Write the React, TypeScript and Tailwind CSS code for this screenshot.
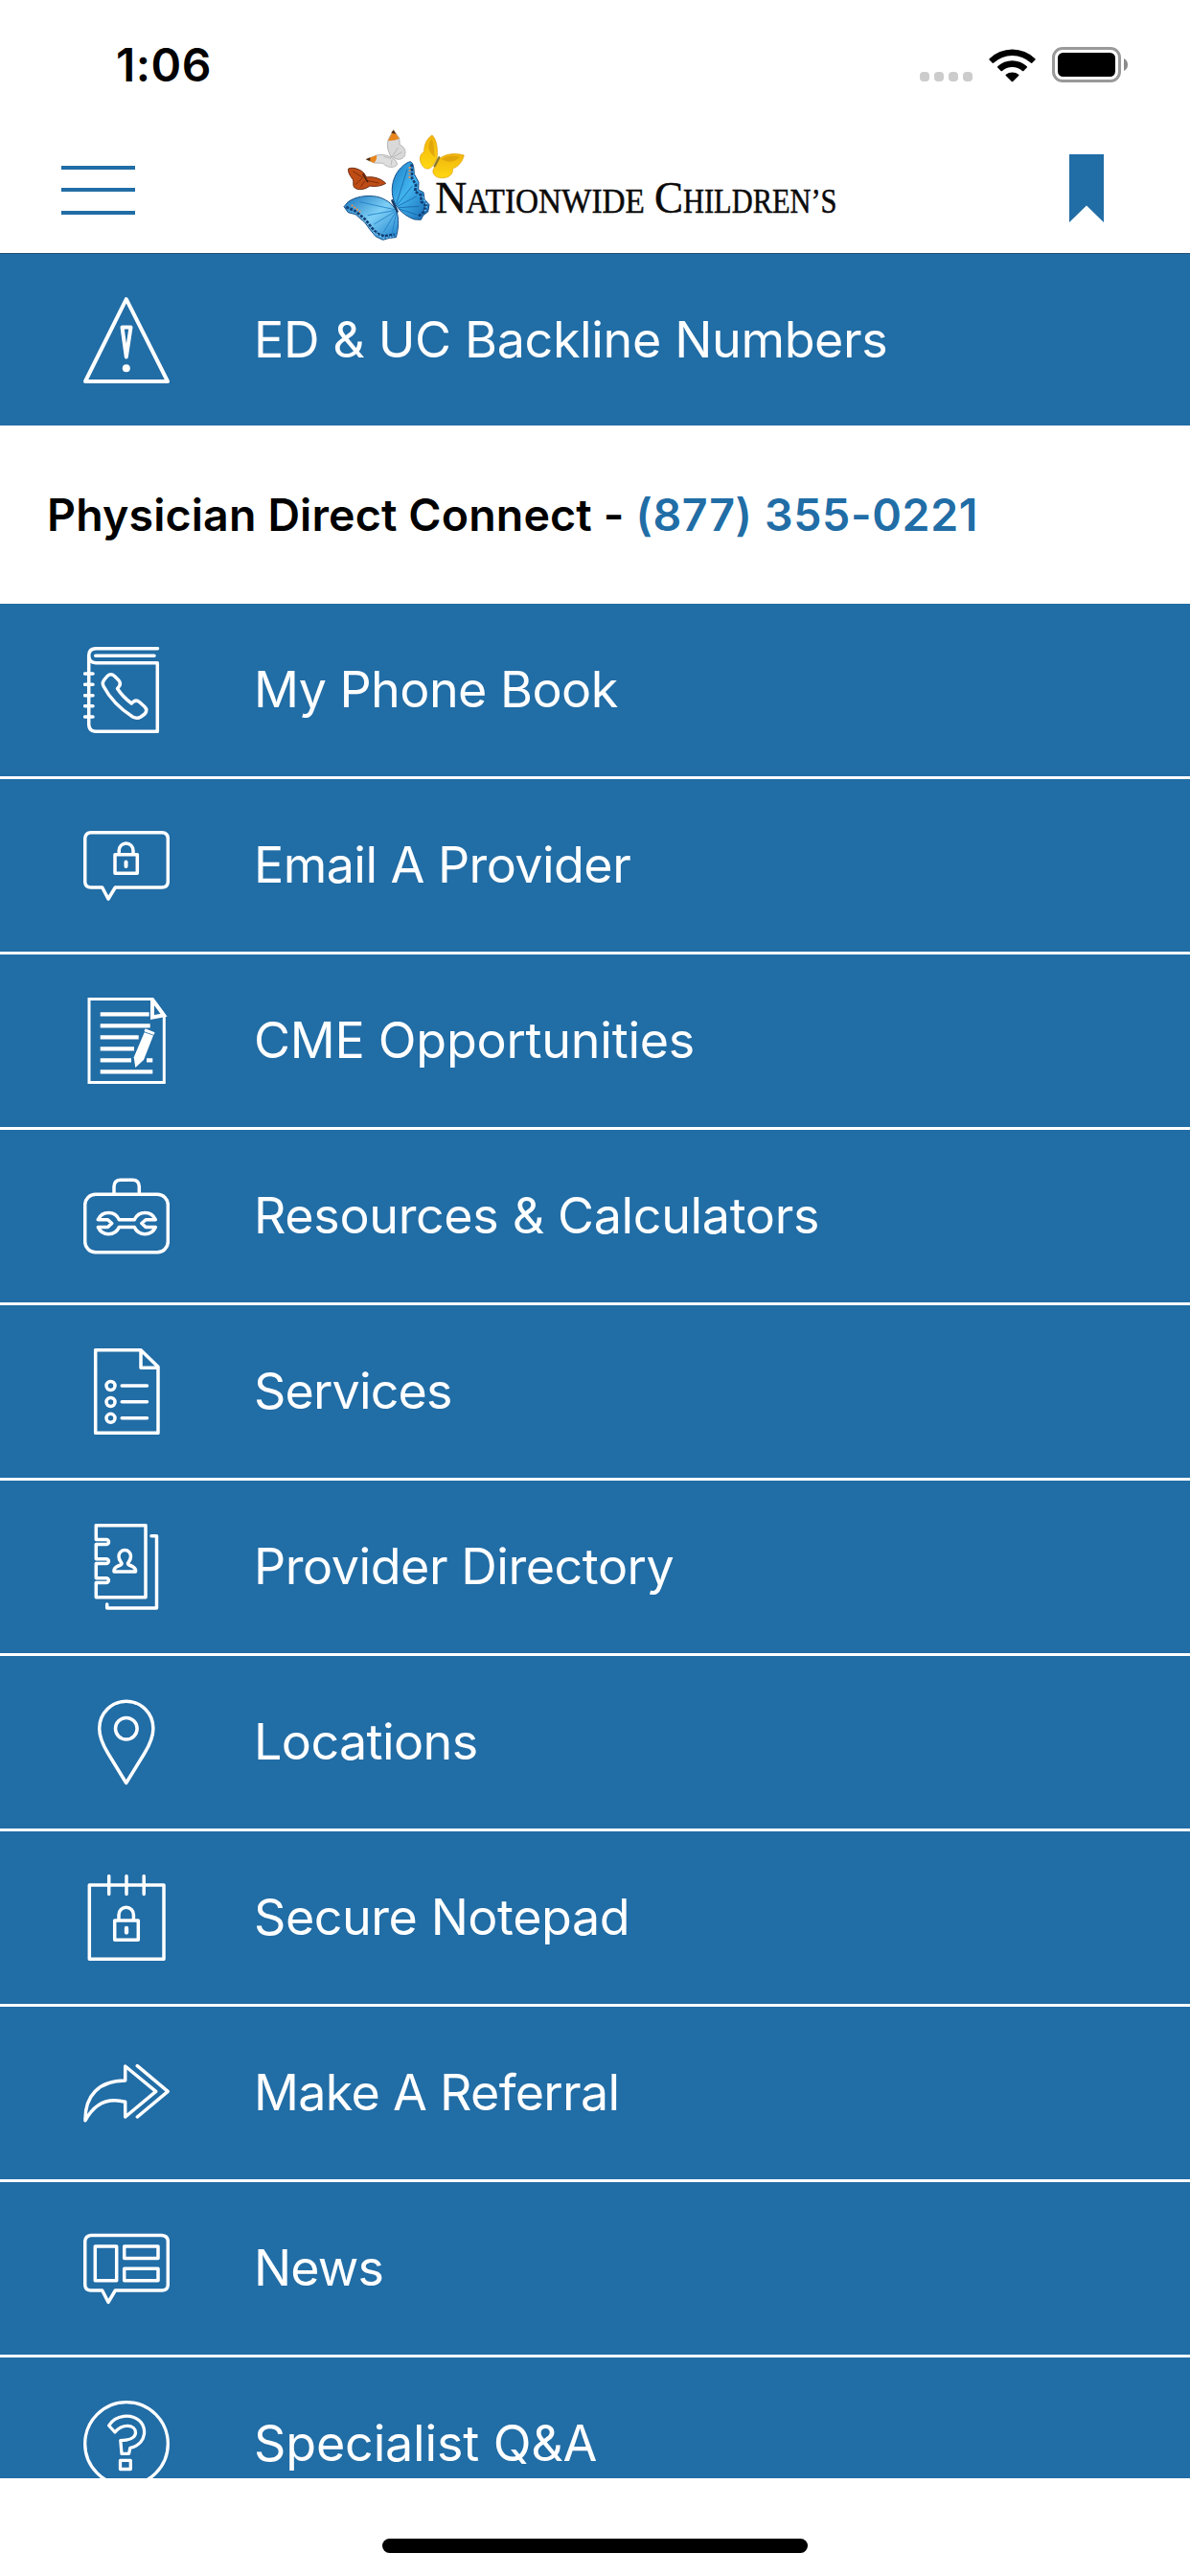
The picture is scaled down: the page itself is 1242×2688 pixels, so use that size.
import { ReactNode } from "react";

type MenuItem = {
  label: string;
  icon: ReactNode;
  tracking: string;
};

const backline: MenuItem = {
  label: "ED & UC Backline Numbers",
  icon: <WarningIcon />,
  tracking: "tracking-[-0.35px]",
};

const menu: MenuItem[] = [
  { label: "My Phone Book", icon: <PhoneBookIcon />, tracking: "tracking-[-0.55px]" },
  { label: "Email A Provider", icon: <SecureMessageIcon />, tracking: "tracking-[-0.55px]" },
  { label: "CME Opportunities", icon: <CmeIcon />, tracking: "tracking-[-0.25px]" },
  { label: "Resources & Calculators", icon: <ToolboxIcon />, tracking: "tracking-[-0.35px]" },
  { label: "Services", icon: <ServicesIcon />, tracking: "tracking-[-0.85px]" },
  { label: "Provider Directory", icon: <DirectoryIcon />, tracking: "tracking-[-0.45px]" },
  { label: "Locations", icon: <PinIcon />, tracking: "tracking-[-0.6px]" },
  { label: "Secure Notepad", icon: <NotepadIcon />, tracking: "tracking-[-0.45px]" },
  { label: "Make A Referral", icon: <ReferralIcon />, tracking: "tracking-[-0.7px]" },
  { label: "News", icon: <NewsIcon />, tracking: "tracking-[-0.85px]" },
  { label: "Specialist Q&A", icon: <QuestionIcon />, tracking: "tracking-[-0.15px]" },
];

export default function App() {
  return (
    <div className="flex h-[2688px] w-[1242px] flex-col overflow-hidden bg-white font-['Inter',sans-serif]">
      <StatusBar />

      {/* NAV BAR */}
      <header className="flex h-[133px] shrink-0 items-center justify-between border-b border-[#1d4f78] bg-white pr-[90px] pl-[64px]">
        <button aria-label="Menu" className="flex h-[51px] w-[77px] flex-col justify-between">
          <span className="h-1 w-full bg-[#216da6]" />
          <span className="h-1 w-full bg-[#216da6]" />
          <span className="h-1 w-full bg-[#216da6]" />
        </button>
        <Logo />
        <button aria-label="Bookmarks" className="-mt-[3px]">
          <svg width="36" height="71" viewBox="0 0 36 71" fill="#216da6">
            <path d="M0 0H36V71L18 53.5 0 71Z" />
          </svg>
        </button>
      </header>

      {/* MENU */}
      <main className="flex min-h-0 flex-1 flex-col overflow-hidden">
        <div className="h-[179px] shrink-0">
          <MenuRow item={backline} />
        </div>

        <div className="flex h-[186px] shrink-0 items-center pl-[49px] text-[46.5px] leading-none font-semibold whitespace-pre text-black">
          <span className="tracking-[0.15px]">Physician Direct Connect - </span>
          <a className="tracking-[0.65px] text-[#216da6]">(877) 355-0221</a>
        </div>

        <nav className="flex flex-col gap-[3px]">
          {menu.map((item) => (
            <div key={item.label} className="h-[180px] shrink-0">
              <MenuRow item={item} />
            </div>
          ))}
        </nav>
      </main>

      {/* HOME INDICATOR */}
      <footer className="flex h-[102px] shrink-0 justify-center bg-white pt-[63px]">
        <div className="h-[15px] w-[444px] rounded-full bg-black" />
      </footer>
    </div>
  );
}

function MenuRow({ item }: { item: MenuItem }) {
  return (
    <div className="flex h-full items-center bg-[#216da6] pl-[87px] text-white">
      {item.icon}
      <span className={`ml-[88px] text-[52px] leading-none whitespace-nowrap ${item.tracking}`}>
        {item.label}
      </span>
    </div>
  );
}

function StatusBar() {
  return (
    <div className="flex h-[132px] shrink-0 justify-between pr-[65px] pl-[121px]">
      <span className="pt-[44px] text-[48px] leading-[48px] font-semibold tracking-[0.5px] text-black">
        1:06
      </span>
      <div className="flex pt-[49px]">
        <div className="flex gap-[5px] pt-[26px]">
          <i className="h-[10px] w-[10px] rounded-[4px] bg-[#cccccc]" />
          <i className="h-[10px] w-[10px] rounded-[4px] bg-[#cccccc]" />
          <i className="h-[10px] w-[10px] rounded-[4px] bg-[#cccccc]" />
          <i className="h-[10px] w-[10px] rounded-[4px] bg-[#cccccc]" />
        </div>
        <svg className="ml-[17px]" width="49" height="37" viewBox="0 0 49 37">
          <path d="M0.6 12.2A34 34 0 0 1 48.4 12.2Q49 13 48.4 13.6L45.2 16.8Q44.5 17.3 43.8 16.6A28.5 28.5 0 0 0 5.2 16.6Q4.500 17.3 3.8 16.8L0.6 13.600Q0 13 0.6 12.2Z" />
          <path d="M9.2 20.2A22.5 22.5 0 0 1 39.8 20.2Q40.4 21 39.8 21.6L36.4 25Q35.7 25.6 35 25A15.5 15.5 0 0 0 14 25Q13.3 25.6 12.6 25L9.2 21.6Q8.6 21 9.2 20.2Z" />
          <path d="M17.8 28.8A10.5 10.5 0 0 1 31.2 28.8Q31.8 29.5 31.2 30.1L25.2 36Q24.5 36.6 23.8 36L17.8 30.1Q17.2 29.5 17.8 28.8Z" />
        </svg>
        <svg className="ml-[17px]" width="79" height="37" viewBox="0 0 79 37">
          <rect x="1.5" y="1.5" width="69" height="34" rx="9.5" fill="none" stroke="#999999" strokeWidth="3" />
          <rect x="6" y="6" width="60" height="25" rx="5.5" />
          <path d="M75 12Q79 14 79 18.5T75 25Z" fill="#8a8a8a" />
        </svg>
      </div>
    </div>
  );
}

/* LOGO */
function Logo() {
  return (
    <svg className="-mt-2 mr-6 overflow-visible" width="520" height="120" viewBox="0 0 520 120">
      <defs>
        <linearGradient id="wingRight" x1="0" y1="0" x2="1" y2="1">
          <stop offset="0" stopColor="#1b7cc4" />
          <stop offset="0.45" stopColor="#41b4ee" />
          <stop offset="1" stopColor="#1566b0" />
        </linearGradient>
        <linearGradient id="wingLeft" x1="0" y1="0" x2="1" y2="1">
          <stop offset="0" stopColor="#1674bd" />
          <stop offset="0.5" stopColor="#7fd0f6" />
          <stop offset="1" stopColor="#1a7fca" />
        </linearGradient>
        <linearGradient id="yellow" x1="0" y1="0" x2="0" y2="1">
          <stop offset="0" stopColor="#f0b40c" />
          <stop offset="1" stopColor="#ffd813" />
        </linearGradient>
      </defs>

      <g transform="scale(0.3333) translate(-50 -40)">
        {/* white butterfly */}
        <path d="M203 128C190 105 190 85 196 72L211 45 229 70 231 92C246 97 252 112 245 128 237 140 220 139 210 130Z" fill="#d9d9d9" stroke="#999" strokeWidth="2" />
        <path d="M194 78L211 45 229 72Q212 80 194 78Z" fill="#e8851c" />
        <path d="M204 54L211 45 219 57Z" fill="#4a2a1a" />
        <path d="M206 132C190 122 175 121 158 124L125 137 150 148 178 149C190 163 212 166 223 153Q222 140 206 132Z" fill="#dedede" stroke="#999" strokeWidth="2" />
        <path d="M158 124L125 137 150 148Q161 137 158 124Z" fill="#e8851c" />
        <path d="M138 131L125 137 138 142Z" fill="#4a2a1a" />
        <path d="M208 126L226 100M209 130L238 114M203 134L180 128M206 138L204 155" stroke="#a8a8a8" strokeWidth="2" fill="none" />

        {/* orange butterfly */}
        <path d="M70 166C85 160 106 168 117 178L127 193C148 189 174 198 187 212 172 221 153 223 137 220 123 231 101 235 90 226 82 221 88 208 84 200 76 190 68 178 70 166Z" fill="#bf4c15" stroke="#6b2b12" strokeWidth="3" />
        <path d="M84 174L115 194 92 216M127 203L165 211M122 204L108 224" stroke="#7a2d0d" strokeWidth="3" fill="none" />
        <path d="M116 184L130 207" stroke="#4d210f" strokeWidth="5" strokeLinecap="round" />

        {/* yellow butterfly */}
        <path d="M347 136C350 115 350 78 332 61 315 72 306 92 307 113 292 121 291 139 299 152 306 169 323 171 333 158Z" fill="url(#yellow)" stroke="#e0a010" strokeWidth="2" />
        <path d="M350 140C367 120 400 115 432 124 427 145 414 160 396 166 399 181 387 194 368 195 347 197 332 186 335 170Z" fill="url(#yellow)" stroke="#e0a010" strokeWidth="2" />
        <path d="M341 130C338 105 338 90 331 74 318 90 315 110 341 130ZM362 137C378 124 400 124 419 130 402 145 385 149 362 137Z" fill="#d99b0b" opacity="0.7" />
        <path d="M354 131L340 158" stroke="#8d7a2a" strokeWidth="7" strokeLinecap="round" />

        {/* blue butterfly */}
        <path d="M217 278C203 250 203 213 219 184 230 163 250 147 264 144 274 148 275 165 276 183L290 209 289 232 305 240 308 262 323 279 319 301 304 312 297 326 277 325C257 318 234 304 217 278Z" fill="url(#wingRight)" stroke="#164d86" strokeWidth="3" strokeLinejoin="round" />
        <path d="M220 298C208 275 185 260 160 254 126 247 89 255 69 270L56 285 69 303 92 309 121 334 136 355 155 378 178 389 199 383 219 381C227 355 229 320 220 298Z" fill="url(#wingLeft)" stroke="#164d86" strokeWidth="3" strokeLinejoin="round" />
        <path d="M220 276L254 168M222 280L270 220M224 284L284 252M226 288L292 284M228 292L284 310" stroke="#1766aa" strokeWidth="2.5" fill="none" />
        <path d="M214 294L105 270M214 297L130 312M216 300L150 340M218 302L180 365M220 304L206 370" stroke="#1f7fc6" strokeWidth="2.5" fill="none" />
        <path d="M268 152L269 196 281 216 279 238 297 248 298 269 312 282 306 301 289 315" stroke="#123e74" strokeWidth="8" strokeDasharray="9 4" fill="none" />
        <path d="M63 286L92 299 124 326 142 350 160 369 182 377 214 372" stroke="#123e74" strokeWidth="8" strokeDasharray="9 4" fill="none" />
        <path d="M262 160L261 198M80 280L108 302" stroke="#ef8f4a" strokeWidth="6" strokeDasharray="5 5" fill="none" />
        <path d="M303 254L316 280 309 300M150 366L180 384 212 378" stroke="#8fd4f5" strokeWidth="4" strokeDasharray="4 7" fill="none" />
        <path d="M207 266L223 300" stroke="#143a66" strokeWidth="7" strokeLinecap="round" />
      </g>

      <g className="font-['Liberation_Serif',serif]" fill="#0a0a0a" stroke="#0a0a0a" strokeWidth="0.5">
        <text y="88.3">
          <tspan x="97.3" fontSize="46.5" textLength="33" lengthAdjust="spacingAndGlyphs">N</tspan>
          <tspan x="129.3" fontSize="35.5" textLength="186.5" lengthAdjust="spacingAndGlyphs">ATIONWIDE</tspan>
        </text>
        <text y="88.3">
          <tspan x="326" fontSize="46.5" textLength="30" lengthAdjust="spacingAndGlyphs">C</tspan>
          <tspan x="356" fontSize="35.5" textLength="160.500" lengthAdjust="spacingAndGlyphs">HILDREN’S</tspan>
        </text>
      </g>
    </svg>
  );
}

/* MENU ICONS */
function Icon({ children, stroke = 3.5 }: { children: ReactNode; stroke?: number }) {
  return (
    <svg
      className="shrink-0"
      width="90"
      height="90"
      viewBox="0 0 90 90"
      fill="none"
      stroke="currentColor"
      strokeWidth={stroke}
      strokeLinecap="round"
      strokeLinejoin="round"
    >
      {children}
    </svg>
  );
}

function WarningIcon() {
  return (
    <Icon stroke={4}>
      <path d="M44.8 2.2L88 88H2Z" />
      <path d="M40.5 31.5H49.5L44.8 62.5Z" />
      <circle cx="44.8" cy="74.3" r="4" fill="currentColor" stroke="none" />
    </Icon>
  );
}

function PhoneBookIcon() {
  return (
    <Icon>
      <path d="M77.5 1.7H13Q5.7 2 5.7 9V81Q6 88.3 13.5 88.3H77.3V16.7H13Q6 16.5 5.7 9M12.7 9.2H74" />
      <path d="M1.5 28H10M1.5 39.3H10M1.5 50.7H10M1.5 61.7H10M1.5 73H10" />
      <path d="M22.5 33.5L25 30.5Q28.7 27 32.5 30.5L37 35Q39.5 38 37.5 41L35.5 43.5Q41 52 50.3 59L52.5 57Q55.5 55 58.5 57.5L64 62.5Q67.5 66 64 70L60 73Q56 75.5 51.5 73Q31 60 21 41Q19 37 22.5 33.5Z" />
    </Icon>
  );
}

function SecureMessageIcon() {
  return (
    <Icon>
      <path d="M8 10.7H82Q88.3 11 88.3 17V62Q88 68 82 68H33.3L26 80 19.7 68H8Q2 68 1.7 62V17Q2 11 8 10.7Z" />
      <path d="M33 33.7H56.3V53.3H33ZM37.2 33V29.5A7.3 7.5 0 0 1 52 29.5V33" />
      <path d="M44.5 41.5V46" strokeWidth="4" />
    </Icon>
  );
}

function CmeIcon() {
  return (
    <Icon stroke={3}>
      <path d="M6 1.5H72L84.3 18.3V88.5H6Z" strokeLinejoin="miter" />
      <path d="M72 2V20.5L84 18.3Z" strokeWidth="4" strokeLinejoin="miter" />
      <path
        d="M17.7 17.3H68.7M17.7 29.3H69.7M17.7 41.3H57.7M17.7 53.3H53M17.7 65.3H50M66 65.3H72.3M17.7 77.3H72.3"
        strokeWidth="4.3"
        strokeLinecap="butt"
      />
      <path d="M63.7 36.3L73 39.5 63 65 54.3 73 52.7 62.3Z" fill="currentColor" stroke="none" />
      <path d="M64.9 33.2L73.7 36.7 73.2 38 64.3 34.7Z" strokeWidth="1.5" />
    </Icon>
  );
}

function ToolboxIcon() {
  return (
    <Icon>
      <rect x="1.7" y="22.3" width="86.6" height="60.4" rx="11" />
      <path d="M32 22V14Q32.3 7.5 39 7.3H51.5Q58 7.5 58.3 14V22" />
      <path d="M15.3 48.7H25.5L29.7 52.5 25.5 56.5H15.3A12 12 0 0 0 37.3 56.5H53.3A12 12 0 0 0 75.3 56.5H65.1L60.9 52.5 65.1 48.7H75.3A12 12 0 0 0 53.3 48.7H37.3A12 12 0 0 0 15.3 48.7Z" />
    </Icon>
  );
}

function ServicesIcon() {
  return (
    <Icon>
      <path d="M12.7 1.7H60L78 19.3V88.3H12.7ZM60 2V20.3H77.5" />
      <circle cx="28.5" cy="39" r="4.5" />
      <circle cx="28.5" cy="56" r="4.5" />
      <circle cx="28.5" cy="72.8" r="4.5" />
      <path d="M40.2 39H66.5M40.2 55.8H66.5M40.2 72.7H66.5" />
    </Icon>
  );
}

function DirectoryIcon() {
  return (
    <Icon>
      <path d="M13.3 16.5V1.7H65V76.7H13.3V61.5H24A2.3 2.3 0 0 0 24 56.7H13.3V41.5H24A2.3 2.3 0 0 0 24 36.7H13.3V21.5H24A2.3 2.3 0 0 0 24 16.5Z" />
      <path d="M71 12.7H76.5V88H24.7V84" />
      <path d="M32 50H54.5V48.5Q54 45 47.5 43Q45.5 42 47.3 40Q49.5 37 49.5 34A6.2 6.5 0 0 0 37 34Q37 37 39.2 40Q41 42 39 43Q32.5 45 32 48.5Z" />
    </Icon>
  );
}

function PinIcon() {
  return (
    <Icon>
      <path d="M44.7 87.5L26 57C21 49 16.7 39 16.7 30.5A28 28.2 0 0 1 72.9 30.5C72.9 39 68.5 49 63.5 57Z" />
      <circle cx="44.8" cy="30.7" r="11.3" />
    </Icon>
  );
}

function NotepadIcon() {
  return (
    <Icon>
      <path d="M6.3 11H84V88.2H6.3ZM26.7 1.7V20.5M45 1.7V20.5M63.2 1.7V20.5" />
      <path d="M32.7 48H57.3V68.3H32.7ZM37 47.5V42A7.7 7.7 0 0 1 52.4 42V47.5" />
      <path d="M45 56V60.5" strokeWidth="4.3" />
    </Icon>
  );
}

function ReferralIcon() {
  return (
    <Icon>
      <path d="M43.7 17L75.7 43.3 43.7 70V54.3C24 49 11 57 2 73.7C1.5 48 16 32 43.7 32Z" />
      <path d="M56.3 16.7L88.2 43.3 56.3 70" />
    </Icon>
  );
}

function NewsIcon() {
  return (
    <Icon>
      <path d="M8 10.5H82Q88.3 11 88.3 17V62Q88 68 82 68H33.3L26 80.3 19.7 68H8Q2 68 1.7 62V17Q2 11 8 10.5Z" />
      <path d="M12.3 22H34.7V57.7H12.3ZM42.7 22H78V34.5H42.7ZM42.7 45.3H78V57.7H42.7Z" />
    </Icon>
  );
}

function QuestionIcon() {
  return (
    <Icon stroke={3.3}>
      <circle cx="45" cy="45" r="43.3" />
      <path d="M26.6 26C34 14 50 14 58 20.5C64.5 26 65.5 36 60 43C57 46.5 53 48.5 48.8 49.3L47.6 55.3H40L38.8 41.7C47 41.5 54.5 39 54.5 33.3C54.5 25 41 23.5 33 33Z" />
      <path d="M38.5 62.3H49.3V71.5H38.5Z" />
    </Icon>
  );
}
